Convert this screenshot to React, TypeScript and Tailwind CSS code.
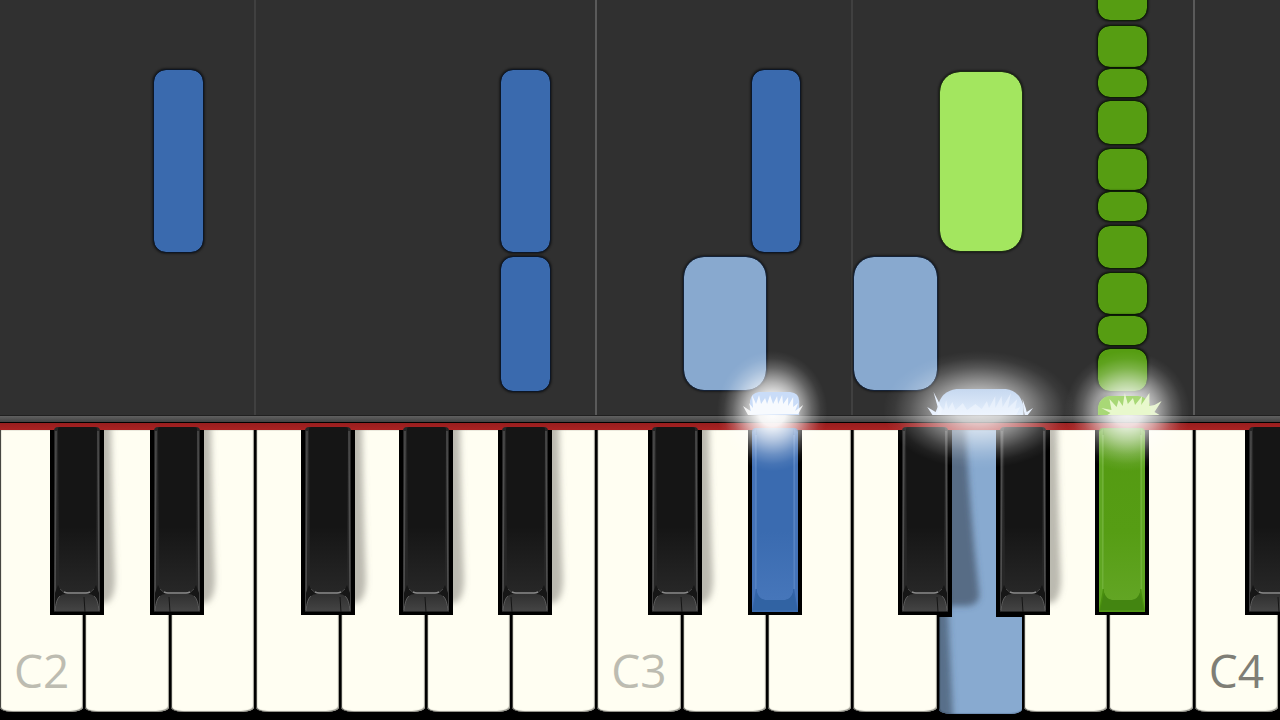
import clsx from 'clsx';

type Tone = 'blue' | 'lightBlue' | 'green' | 'lightGreen';

interface Lane {
  column: string;
  tone: Tone;
  // space between the lowest note and the strike line
  rest: number;
  // top to bottom, slot is the room a note takes up in the lane
  notes: { slot: number; height: number }[];
}

const noteTones: Record<Tone, string> = {
  blue: 'bg-[#3a6aae] outline-[#0c1626] rounded-xl',
  lightBlue: 'bg-[#88a9cf] outline-[#142238] rounded-[20px]',
  green: 'bg-[#569d12] outline-[#0e1f06] rounded-xl',
  lightGreen: 'bg-[#a3e65f] outline-[#1e2c14] rounded-[20px]',
};

const lanes: Lane[] = [
  { column: '2 / 3', tone: 'blue', rest: 163, notes: [{ slot: 182, height: 182 }] },
  { column: '4 / 5', tone: 'blue', rest: 24, notes: [{ slot: 187, height: 182 }, { slot: 134, height: 134 }] },
  { column: '6 / 8', tone: 'lightBlue', rest: 25, notes: [{ slot: 133, height: 133 }] },
  { column: '7 / 9', tone: 'blue', rest: 163, notes: [{ slot: 182, height: 182 }] },
  { column: '10 / 11', tone: 'lightBlue', rest: 25, notes: [{ slot: 133, height: 133 }] },
  { column: '12 / 13', tone: 'lightGreen', rest: 164, notes: [{ slot: 179, height: 179 }] },
  {
    column: '14 / 15',
    tone: 'green',
    rest: 0,
    notes: [
      { slot: 46, height: 40 },
      { slot: 43, height: 41 },
      { slot: 32, height: 28 },
      { slot: 48, height: 43 },
      { slot: 43, height: 41 },
      { slot: 34, height: 29 },
      { slot: 47, height: 42 },
      { slot: 43, height: 41 },
      { slot: 33, height: 29 },
      { slot: 47, height: 42 },
      { slot: 19, height: 41 },
    ],
  },
];

const whiteKeys = ['C2', 'D2', 'E2', 'F2', 'G2', 'A2', 'B2', 'C3', 'D3', 'E3', 'F3', 'G3', 'A3', 'B3', 'C4'];

interface BlackKeyData {
  name: string;
  seam: number;
  pressed?: 'blue' | 'green';
  noShadow?: boolean;
  gap?: string;
  visible?: number;
}

const blackKeys: BlackKeyData[] = [
  { name: 'C#2', seam: 35 },
  { name: 'D#2', seam: 20 },
  { name: 'F#2', seam: 40 },
  { name: 'G#2', seam: 27 },
  { name: 'A#2', seam: 14 },
  { name: 'C#3', seam: 34 },
  { name: 'D#3', seam: 19, pressed: 'blue' },
  { name: 'F#3', seam: 40, noShadow: true, gap: 'M40 187h14v3H40z' },
  { name: 'G#3', seam: 27, gap: 'M0 187h27v3H0z' },
  { name: 'A#3', seam: 14, pressed: 'green' },
  { name: 'C#4', seam: 34, visible: 35 },
];

function KeyDefs() {
  return (
    <svg className="absolute h-0 w-0" aria-hidden="true">
      <defs>
        <linearGradient id="face" x1="0" y1="0" x2="0" y2="1">
          <stop offset="0" stopColor="#151515" />
          <stop offset="0.6" stopColor="#151515" />
          <stop offset="1" stopColor="#272727" />
        </linearGradient>
        <linearGradient id="cap" x1="0" y1="0" x2="0" y2="1">
          <stop offset="0" stopColor="#303030" />
          <stop offset="1" stopColor="#444" />
        </linearGradient>
        <linearGradient id="blueFace" x1="0" y1="0" x2="0" y2="1">
          <stop offset="0" stopColor="#3a6bb0" />
          <stop offset="0.6" stopColor="#3a6bb0" />
          <stop offset="1" stopColor="#4676ba" />
        </linearGradient>
        <linearGradient id="greenFace" x1="0" y1="0" x2="0" y2="1">
          <stop offset="0" stopColor="#549a12" />
          <stop offset="0.6" stopColor="#569d14" />
          <stop offset="1" stopColor="#62a524" />
        </linearGradient>
        <linearGradient id="wideNote" x1="0" y1="0" x2="0" y2="1">
          <stop offset="0" stopColor="#c6d8f0" />
          <stop offset="1" stopColor="#e6f0fd" />
        </linearGradient>
        <filter id="soft" x="-50%" y="-10%" width="200%" height="120%">
          <feGaussianBlur stdDeviation="3" />
        </filter>
        <clipPath id="belowBar">
          <path d="M0 3h100v190H0z" />
        </clipPath>
      </defs>
    </svg>
  );
}

function RaisedKey({ seam, noShadow, gap, visible }: BlackKeyData) {
  return (
    <svg
      viewBox={visible ? '0 0 35 188' : '0 0 54 188'}
      preserveAspectRatio="none"
      className="block h-full w-full overflow-visible"
      aria-hidden="true"
    >
      {!noShadow && (
        <g clipPath="url(#belowBar)">
          <path d="M40-8h21q1 80 4 160 0 18-8 24H40z" fill="#77766d" fillOpacity="0.5" filter="url(#soft)" />
        </g>
      )}
      <rect y="3" width="54" height="185" fill="#000" />
      {gap && <path d={gap} fill="#000" />}
      <path d="M4 185V4q0-4 4-4h38q4 0 4 4v181z" fill="#262626" />
      <path d="M5 183 6 4M49 183 48 4" stroke="#4e4e4e" strokeWidth="1.5" fill="none" />
      <path d="M8 2q0-2 2-2h34q3 0 3 2l-1 155q-1 8-9 9H17q-7-1-8-9z" fill="url(#face)" />
      <path d="M8 158q2 6 9 8h20q7-2 9-8l3 8v18H5v-18z" fill="#161616" />
      <path d="M5 184q1-12 5-15 2-2 6-2h22q4 0 6 2 4 3 5 15z" fill="url(#cap)" />
      <path d="M10 162q3 4 8 4h18q5 0 8-4" stroke="#484848" strokeWidth="1" fill="none" />
      <path d="M14 165q2 1 4 1h18q2 0 4-1" stroke="#888" strokeWidth="1.6" fill="none" />
      <path d="M5 184q1-12 5-15M49 184q-1-12-5-15" stroke="#5b5b5b" strokeWidth="1" fill="none" />
      <path d={`M${seam - 1} 170L${seam} 185`} stroke="#151515" strokeWidth="1" />
    </svg>
  );
}

function PressedKey({ tone }: { tone: 'blue' | 'green' }) {
  const blue = tone === 'blue';
  return (
    <svg viewBox="0 0 54 188" preserveAspectRatio="none" className="block h-full w-full" aria-hidden="true">
      <rect y="3" width="54" height="185" fill="#000" />
      <path d="M4 185V5q0-4 4-4h38q4 0 4 4v180z" fill={blue ? '#3464a8' : '#4a900f'} />
      <path d="M4 184V5l4-3v160zM50 184V5l-4-3v160z" fill={blue ? '#4473b8' : '#5fa622'} />
      <path d="M8 162V8M46 162V8" stroke={blue ? '#6693cf' : '#82bf4a'} strokeWidth="1" />
      <path d="M9 2h36v163q-2 7-8 8H17q-6-1-8-8z" fill={`url(#${tone}Face)`} />
      <path d="M9 166q2 6 8 7h20q6-1 8-7l4 18H5z" fill={blue ? '#3163a3' : '#438511'} />
      <path d="M4 184h46" stroke={blue ? '#4273b3' : '#5ba01d'} strokeWidth="1" />
    </svg>
  );
}

function WhiteKey({ name }: { name: string }) {
  const pressed = name === 'G3';
  const labelled = name.startsWith('C');
  return (
    <button
      type="button"
      aria-label={name}
      aria-pressed={pressed}
      className={clsx(
        'mr-0.5 flex items-end overflow-hidden rounded-b-[12px_5px]',
        pressed
          ? 'h-[284px] bg-[#88aad0] shadow-[inset_0_-1px_1px_#6f8fb5,inset_1px_0_1px_#000]'
          : 'h-[282px] bg-[#fffef2] shadow-[inset_1px_0_1px_#33332f,inset_-1px_-1px_1px_#99988f]',
      )}
    >
      {pressed && (
        <svg viewBox="0 0 83 284" preserveAspectRatio="none" className="h-full w-full" aria-hidden="true">
          <path d="M0-12h26q4 90 14 176 1 10-12 12H0z" fill="#3e4c60" fillOpacity="0.66" filter="url(#soft)" />
          <path d="M-8 160H8l6 130H-8z" fill="#36485a" fillOpacity="0.6" filter="url(#soft)" />
        </svg>
      )}
      {labelled && (
        <span
          className={clsx(
            "pb-[10px] pl-[14px] font-['Open_Sans',sans-serif] text-[46px] leading-[64px]",
            name === 'C4' ? 'text-[#7f7e76]' : 'text-[#bdbcb1]',
          )}
        >
          {name}
        </span>
      )}
    </button>
  );
}

function BlueSparks() {
  return (
    <svg viewBox="0 0 62 30" preserveAspectRatio="none" className="h-full w-[54%]" aria-hidden="true">
      <path d="M7 30V16q1-8 9-9h31q9 1 9 9v14z" fill="#c9dcf8" />
      <path
        d="M5 30 0 21l6 4 2 1-2-8 4 5-1-13 4 9 3-9 2 9 4-6 2 6 3-9 3 9 4-8 1 8 4-9 1 9 5-7v9l5-9v10l5-4-3 8 8-6-5 9z"
        fill="#fff"
        fillOpacity="0.85"
      />
    </svg>
  );
}

function WideSparks() {
  return (
    <svg viewBox="0 0 110 30" preserveAspectRatio="none" className="h-full w-[60%]" aria-hidden="true">
      <path d="M15 30V22Q18 6 33 4h47q14 2 17 18v8z" fill="url(#wideNote)" />
      <path d="M10 30 5 22l8 5 2-5-4-15 6 12 2 6-1 5zM98 30l-1-6-1-10 3 9 1 4 6-4-5 7z" fill="#e9f2ff" />
      <path
        d="M14 30l3-10 4 5 2-10 2 9 4-7 3 8 7-7 4 7 8-6 6 5 5-8 2 7 6-12v12l6-12 1 11 8-14-3 15 9-9-2 10 5-2-4 8z"
        fill="#f5faff"
        fillOpacity="0.5"
      />
    </svg>
  );
}

function GreenSparks() {
  return (
    <svg viewBox="0 0 70 30" preserveAspectRatio="none" className="h-full w-[56%]" aria-hidden="true">
      <path d="M7 30V22q2-10 11-11h28q10 1 12 11v8z" fill="#a8d876" />
      <path
        d="M16 30l3-2-9-5 10 2-2-11 7 8 2-7 4 6 2-13 3 11 5-6 2 7 7-9-1 9 8-12v13l5-1 7-4-7 11 5 3z"
        fill="#eefcd6"
        fillOpacity="0.9"
      />
    </svg>
  );
}

function HitGlow({ kind }: { kind: 'blue' | 'wide' | 'green' }) {
  return (
    <div
      className={clsx(
        'pointer-events-none absolute -top-16 h-32',
        kind === 'blue' &&
          'left-[56%] w-[9%] bg-[radial-gradient(closest-side_at_48%_47%,#ffffff,#fffffff0_25%,#ffffffa0_48%,#ffffff40_72%,#ffffff10_88%,transparent)]',
        kind === 'wide' &&
          'left-[69%] w-[15%] bg-[radial-gradient(closest-side_at_50%_46%,#ffffffd0,#ffffffb8_25%,#ffffff78_48%,#ffffff30_72%,#ffffff0c_88%,transparent)]',
        kind === 'green' &&
          'left-[83%] w-[10%] bg-[radial-gradient(closest-side_at_51%_47%,#fffffff0,#ffffffd8_25%,#ffffff90_48%,#ffffff38_72%,#ffffff0e_88%,transparent)]',
      )}
    >
      <div className="flex h-1/2 items-end justify-center">
        <div className="flex h-[30px] w-full justify-center">
          {kind === 'blue' && <BlueSparks />}
          {kind === 'wide' && <WideSparks />}
          {kind === 'green' && <GreenSparks />}
        </div>
      </div>
    </div>
  );
}

function NoteRoll() {
  return (
    <section className="grid min-h-[415px] flex-1 overflow-hidden bg-[#303030]">
      <div className="col-start-1 row-start-1 grid grid-cols-[256fr_341fr_256fr_342fr_85fr]">
        <div className="border-r-2 border-[#404040]" />
        <div className="border-r-2 border-[#5a5a5a]" />
        <div className="border-r-2 border-[#404040]" />
        <div className="border-r-2 border-[#5a5a5a]" />
      </div>
      <div className="col-start-1 row-start-1 grid h-[415px] grid-cols-[154fr_49fr_298fr_49fr_134fr_68fr_14fr_34fr_54fr_83fr_3fr_82fr_76fr_49fr_133fr] self-end">
        {lanes.map((lane) => (
          <div
            key={lane.column}
            className="row-start-1 flex min-h-0 flex-col justify-end"
            style={{ gridColumn: lane.column, paddingBottom: lane.rest }}
          >
            {lane.notes.map((note, index) => (
              <div key={index} className="shrink-0" style={{ height: note.slot }}>
                <div
                  className={clsx('shadow-[0_0_2px_2px_#00000070] outline', noteTones[lane.tone])}
                  style={{ height: note.height }}
                />
              </div>
            ))}
          </div>
        ))}
      </div>
    </section>
  );
}

function Keyboard() {
  return (
    <section className="relative bg-black">
      <KeyDefs />
      <div className="h-2 border-y border-black border-t-[#202020] bg-linear-to-b from-[#606060] to-[#424242]" />
      <div className="h-[7px] bg-linear-to-b from-[#981e1e] to-[#aa2222]" />
      <div className="grid h-[290px] grid-cols-15 items-start">
        {whiteKeys.map((name) => (
          <WhiteKey key={name} name={name} />
        ))}
      </div>
      {/* black keys lie over the white ones, odd columns are the gaps */}
      <div className="pointer-events-none absolute inset-x-0 top-3 grid h-[188px] grid-cols-[50fr_54fr_46fr_54fr_97fr_54fr_44fr_54fr_45fr_54fr_96fr_54fr_46fr_54fr_96fr_54fr_44fr_54fr_45fr_54fr_96fr_35fr]">
        {blackKeys.map((key, index) => (
          <button
            key={key.name}
            type="button"
            aria-label={key.name}
            aria-pressed={Boolean(key.pressed)}
            className="pointer-events-auto row-start-1 h-[188px]"
            style={{ gridColumnStart: index * 2 + 2 }}
          >
            {key.pressed ? <PressedKey tone={key.pressed} /> : <RaisedKey {...key} />}
          </button>
        ))}
      </div>
      <HitGlow kind="blue" />
      <HitGlow kind="wide" />
      <HitGlow kind="green" />
    </section>
  );
}

export default function App() {
  return (
    <main className="flex min-h-screen flex-col overflow-hidden bg-black">
      <NoteRoll />
      <Keyboard />
    </main>
  );
}
